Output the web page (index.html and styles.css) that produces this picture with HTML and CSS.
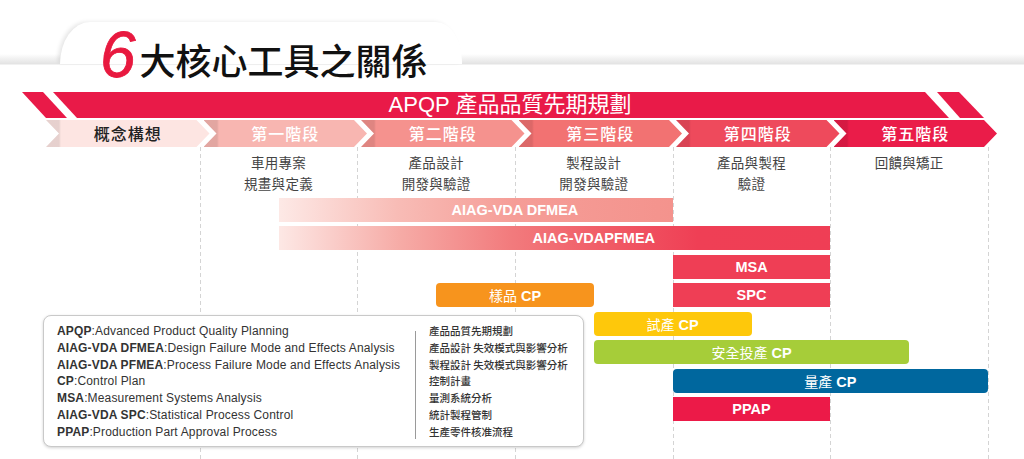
FILE: index.html
```html
<!DOCTYPE html>
<html lang="zh-Hant">
<head>
<meta charset="utf-8">
<title>6大核心工具之關係</title>
<link rel="stylesheet" href="styles.css">
</head>
<body>
<div class="page">
  <header class="head">
    <div class="tab">
      <h1 class="title"><span class="six">6</span>大核心工具之關係</h1>
    </div>
  </header>

  <div class="banner">
    <div class="bn bn-a"></div>
    <div class="bn bn-main">APQP 產品品質先期規劃</div>
    <div class="bn bn-b"></div>
  </div>

  <div class="phases">
    <div class="ph ph0">概念構想</div>
    <div class="ph ph1">第一階段</div>
    <div class="ph ph2">第二階段</div>
    <div class="ph ph3">第三階段</div>
    <div class="ph ph4">第四階段</div>
    <div class="ph ph5">第五階段</div>
  </div>

  <div class="lanes">
    <div class="descs">
      <div class="desc"></div>
      <div class="desc">車用專案<br>規畫與定義</div>
      <div class="desc">產品設計<br>開發與驗證</div>
      <div class="desc">製程設計<br>開發與驗證</div>
      <div class="desc">產品與製程<br>驗證</div>
      <div class="desc">回饋與矯正</div>
    </div>

    <div class="bars">
      <div class="bar b-dfmea">AIAG-VDA DFMEA</div>
      <div class="bar b-pfmea">AIAG-VDAPFMEA</div>
      <div class="bar b-msa">MSA</div>
      <div class="bar b-sample"><span class="zh">樣品</span> CP</div>
      <div class="bar b-spc">SPC</div>
      <div class="bar b-trial"><span class="zh">試產</span> CP</div>
      <div class="bar b-safe"><span class="zh">安全投產</span> CP</div>
      <div class="bar b-mass"><span class="zh">量產</span> CP</div>
      <div class="bar b-ppap">PPAP</div>

      <div class="legend">
        <ul class="leg-en">
          <li><b>APQP</b>:Advanced Product Quality Planning</li>
          <li><b>AIAG-VDA DFMEA</b>:Design Failure Mode and Effects Analysis</li>
          <li><b>AIAG-VDA PFMEA</b>:Process Failure Mode and Effects Analysis</li>
          <li><b>CP</b>:Control Plan</li>
          <li><b>MSA</b>:Measurement Systems Analysis</li>
          <li><b>AIAG-VDA SPC</b>:Statistical Process Control</li>
          <li><b>PPAP</b>:Production Part Approval Process</li>
        </ul>
        <div class="leg-div"></div>
        <ul class="leg-zh">
          <li>產品品質先期規劃</li>
          <li>產品設計 失效模式與影響分析</li>
          <li>製程設計 失效模式與影響分析</li>
          <li>控制計畫</li>
          <li>量測系統分析</li>
          <li>統計製程管制</li>
          <li>生產零件核准流程</li>
        </ul>
      </div>
    </div>
  </div>
</div>
</body>
</html>
```

FILE: styles.css
```css
* { box-sizing: border-box; }

html, body {
  margin: 0;
  padding: 0;
  background: #fff;
}

body {
  font-family: "Liberation Sans", "Noto Sans CJK TC", sans-serif;
  color: #333;
}

.page {
  width: 1024px;
  height: 459px;
  overflow: hidden;
  background: #fff;
}

/* ---------- header tab ---------- */
.head {
  height: 92px;
  padding-top: 22px;
  background: linear-gradient(to bottom,
    #fff 0, #fff 54px, #f3f3f3 58px, #e3e3e3 64px, #fff 65px, #fff 100%);
}

.tab {
  margin-left: 60px;
  width: 402px;
  height: 42px;
  background: #fff;
  border-radius: 30px 26px 0 0 / 42px 40px 0 0;
  box-shadow: -3px -1px 4px -1px rgba(0, 0, 0, 0.10);
}

.title {
  margin: 0;
  padding-left: 40px;
  padding-top: 16px;
  font-family: "Noto Sans CJK TC", sans-serif;
  font-weight: 500;
  font-size: 36px;
  line-height: 42px;
  color: #111;
  white-space: nowrap;
}

.six {
  font-family: "Liberation Sans", sans-serif;
  font-style: italic;
  font-weight: normal;
  font-size: 64px;
  line-height: 0;
  color: #e8193f;
  vertical-align: -2px;
  margin-right: 4px;
  -webkit-text-stroke: 0.8px #e8193f;
}

/* ---------- APQP banner ---------- */
.banner {
  display: flex;
  height: 26px;
  margin-left: 22px;
}

.bn {
  flex: none;
  background: #e91a48;
}

.bn-a {
  width: 45px;
  clip-path: polygon(0 0, 21px 0, 100% 100%, 24px 100%);
}

.bn-main {
  width: 896px;
  margin-left: -14px;
  padding-left: 18px;
  clip-path: polygon(0 0, calc(100% - 24px) 0, 100% 100%, 24px 100%);
  color: #fff;
  font-size: 22px;
  line-height: 26px;
  text-align: center;
  font-family: "Liberation Sans", "Noto Sans CJK TC", sans-serif;
}

.bn-b {
  width: 47px;
  margin-left: -12px;
  clip-path: polygon(0 0, 22px 0, 100% 100%, 23px 100%);
}

/* ---------- phase chevrons ---------- */
.phases {
  display: flex;
  height: 27px;
  margin-top: 2px;
  margin-left: 46px;
}

.ph {
  flex: none;
  width: 163.5px;
  margin-left: -6px;
  clip-path: polygon(0 0, calc(100% - 13px) 0, 100% 50%, calc(100% - 13px) 100%, 0 100%, 13px 50%);
  font-family: "Noto Sans CJK TC", sans-serif;
  font-weight: 500;
  font-size: 16px;
  letter-spacing: 1px;
  line-height: 27px;
  text-align: center;
  color: #fff;
  background-image: linear-gradient(to right, rgba(0, 0, 0, 0.09) 0, rgba(0, 0, 0, 0.09) 13px, rgba(0, 0, 0, 0) 15px);
}

.ph0 { margin-left: 0; background-color: #fde5e2; color: #222; }
.ph1 { background-color: #f8b6b1; }
.ph2 { background-color: #f5928e; }
.ph3 { background-color: #f27272; }
.ph4 { background-color: #ee4a5c; }
.ph5 { background-color: #ea1c49; }

/* ---------- lanes ---------- */
.lanes {
  margin-left: 42px;
  width: 948px;
  height: 312px;
  background-image:
    repeating-linear-gradient(to bottom, #d4d4d4 0 4px, transparent 4px 7px),
    repeating-linear-gradient(to bottom, #d4d4d4 0 4px, transparent 4px 7px),
    repeating-linear-gradient(to bottom, #d4d4d4 0 4px, transparent 4px 7px),
    repeating-linear-gradient(to bottom, #d4d4d4 0 4px, transparent 4px 7px),
    repeating-linear-gradient(to bottom, #d4d4d4 0 4px, transparent 4px 7px),
    repeating-linear-gradient(to bottom, #d4d4d4 0 4px, transparent 4px 7px);
  background-size: 1px 100%;
  background-repeat: no-repeat;
  background-position: 158px 0, 315px 0, 473px 0, 631px 0, 788px 0, 946px 0;
}

.descs {
  display: grid;
  grid-template-columns: repeat(6, 1fr);
  width: 946px;
  height: 51px;
  padding-top: 5px;
}

.desc {
  font-family: "Noto Sans CJK TC", sans-serif;
  font-size: 13.5px;
  letter-spacing: 0.3px;
  line-height: 21px;
  text-align: center;
  color: #444;
}

.bars {
  display: grid;
  width: 946px;
  grid-template-columns: repeat(12, 1fr);
  grid-auto-rows: 24px;
  row-gap: 4.43px;
}

.bar {
  color: #fff;
  font-family: "Liberation Sans", "Noto Sans CJK TC", sans-serif;
  font-weight: bold;
  font-size: 14.5px;
  line-height: 24px;
  text-align: center;
  white-space: nowrap;
}

.bar .zh {
  font-family: "Noto Sans CJK TC", sans-serif;
  font-weight: 400;
  font-size: 14px;
}

.b-dfmea {
  grid-column: 4 / 9;
  grid-row: 1;
  padding-left: 78.8px;
  background: linear-gradient(to right, #fde9e6 0%, #f8bcb6 30%, #f59d97 60%, #f4938d 100%);
}

.b-pfmea {
  grid-column: 4 / 11;
  grid-row: 2;
  padding-left: 78.8px;
  background: linear-gradient(to right, #fde8e5 0%, #f6aba6 22%, #f27b7d 42%, #f05a65 60%, #ef3f55 76%, #ef3e55 100%);
}

.b-msa { grid-column: 9 / 11; grid-row: 3; background: #ef3e55; }
.b-spc { grid-column: 9 / 11; grid-row: 4; background: #ef3e55; }
.b-sample { grid-column: 6 / 8; grid-row: 4; background: #f7941d; border-radius: 4px; }
.b-trial { grid-column: 8 / 10; grid-row: 5; background: #fec80b; border-radius: 4px; }
.b-safe { grid-column: 8 / 12; grid-row: 6; background: #a6cd39; border-radius: 4px; }
.b-mass { grid-column: 9 / 13; grid-row: 7; background: #00679e; border-radius: 4px; }
.b-ppap { grid-column: 9 / 11; grid-row: 8; background: #ec1a48; }

/* ---------- legend ---------- */
.legend {
  grid-column: 1 / 8;
  grid-row: 5 / 9;
  align-self: start;
  height: 132px;
  margin: 3px 10px 0 1px;
  display: flex;
  align-items: flex-start;
  padding: 7px 0 0 13px;
  background: #fff;
  border: 1px solid #c9c9c9;
  border-radius: 8px;
  box-shadow: 0 1px 3px rgba(0, 0, 0, 0.18);
}

.leg-en, .leg-zh {
  list-style: none;
  margin: 0;
  padding: 0;
  line-height: 16.9px;
  color: #333;
}

.leg-en {
  width: 358px;
  font-size: 12px;
  letter-spacing: 0.15px;
  white-space: nowrap;
}

.leg-en b { font-weight: bold; }

.leg-div {
  width: 1px;
  height: 108px;
  margin-top: 8px;
  background: #9a9a9a;
}

.leg-zh {
  margin-left: 13px;
  font-family: "Noto Sans CJK TC", sans-serif;
  font-weight: 500;
  font-size: 10.5px;
  white-space: nowrap;
}
```
